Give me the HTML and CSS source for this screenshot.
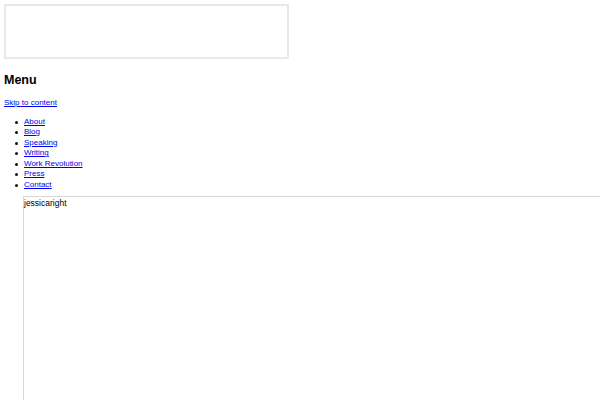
FILE: index.html
```html
<!DOCTYPE html>
<html>
<head>
<meta charset="utf-8">
<link rel="stylesheet" href="styles.css">
</head>
<body>
<div class="search-box"></div>
<h2 class="menu-title">Menu</h2>
<a class="skip" href="#content">Skip to content</a>
<ul class="nav">
  <li><a href="#">About</a></li>
  <li><a href="#">Blog</a></li>
  <li><a href="#">Speaking</a></li>
  <li><a href="#">Writing</a></li>
  <li><a href="#">Work Revolution</a></li>
  <li><a href="#">Press</a></li>
  <li><a href="#">Contact</a></li>
</ul>
<div class="widget">
  <div class="widget-name">jessicaright</div>
</div>
</body>
</html>
```
FILE: styles.css
```css
html, body {
  margin: 0;
  padding: 0;
  background: #fff;
}
html {
  overflow: hidden;
}
body {
  padding: 4px 0 0 4px;
  font-family: "Liberation Sans", Arial, sans-serif;
  font-size: 8px;
  line-height: 10.5px;
  color: #000;
  height: 396px;
  overflow: hidden;
}
.search-box {
  width: 281px;
  height: 51px;
  border: 2px solid #e8e8e8;
}
.menu-title {
  font-size: 12.5px;
  line-height: 16px;
  font-weight: bold;
  margin: 13px 0 10px;
}
a {
  color: #0000ee;
}
.skip {
  display: block;
  margin-bottom: 8px;
}
.nav {
  margin: 0;
  padding-left: 20px;
  list-style: none;
}
.nav li {
  position: relative;
}
.nav li::before {
  content: "";
  position: absolute;
  left: -9px;
  top: 4px;
  width: 3px;
  height: 3px;
  border-radius: 50%;
  background: #111;
}
.widget {
  margin: 6px 0 0 19px;
  border-left: 1px solid #d8d8d8;
  border-top: 1px solid #d8d8d8;
  height: 300px;
  padding: 1px 0 0 0;
  font-size: 8.5px;
}
```
